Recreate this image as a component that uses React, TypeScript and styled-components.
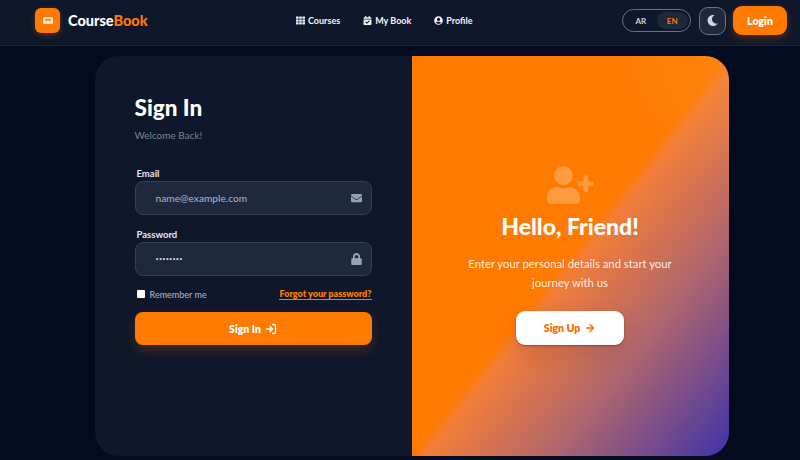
import React from "react";
import styled, { createGlobalStyle } from "styled-components";
import { FaTh, FaCalendarCheck, FaUserCircle, FaMoon, FaEnvelope, FaLock, FaUserPlus } from "react-icons/fa";
import { ArrowRight, LogIn } from "lucide-react";

const Global = createGlobalStyle`
    html, body {
        margin: 0;
        padding: 0;
        background: #050b1f;
    }
    * {
        box-sizing: border-box;
    }
    body {
        font-family: "Lato", "Noto Sans", sans-serif;
    }
`;

const Page = styled.div`
    width: 800px;
    height: 460px;
    overflow: hidden;
    background: #050b1f;
`;

const Header = styled.header`
    height: 46px;
    display: flex;
    align-items: center;
    padding: 0 13px 4px 35px;
    background: #0f172a;
    border-bottom: 1px solid #1b2436;
`;

const Brand = styled.div`
    width: 240px;
    display: flex;
    align-items: center;
    gap: 8px;
`;

const LogoBox = styled.div`
    width: 25px;
    height: 25px;
    border-radius: 6px;
    background: #ff7a00;
    display: flex;
    align-items: center;
    justify-content: center;
    box-shadow: 0 2px 6px rgba(255, 122, 0, 0.25);
`;

const BrandName = styled.span`
    font-size: 14.5px;
    font-weight: 900;
    color: #fff;
    em {
        font-style: normal;
        color: #ff7a00;
    }
`;

const Nav = styled.nav`
    display: flex;
    align-items: center;
    gap: 23px;
    margin-left: 21px;
`;

const NavItem = styled.a`
    display: flex;
    align-items: center;
    gap: 3px;
    font-size: 9px;
    font-weight: 700;
    color: #f1f5f9;
    svg {
        width: 9px;
        height: 9px;
    }
`;

const HeaderRight = styled.div`
    margin-left: auto;
    display: flex;
    align-items: center;
`;

const LangSwitch = styled.div`
    width: 69px;
    height: 23px;
    margin-right: 8px;
    border: 1px solid #64748b;
    border-radius: 12px;
    display: flex;
    align-items: center;
    padding: 2px;
`;

const LangOption = styled.span<{ active?: boolean }>`
    flex: 1;
    height: 17px;
    border-radius: 9px;
    display: flex;
    align-items: center;
    justify-content: center;
    font-size: 8px;
    font-weight: 700;
    color: ${({ active }) => (active ? "#ff7a00" : "#cbd5e1")};
    background: ${({ active }) => (active ? "#1e293b" : "transparent")};
`;

const ThemeButton = styled.button`
    width: 27px;
    height: 28px;
    margin-right: 7px;
    padding: 0;
    border: 1px solid #64748b;
    border-radius: 9px;
    background: #1e293b;
    color: #cbd5e1;
    display: flex;
    align-items: center;
    justify-content: center;
    svg {
        width: 11px;
        height: 11px;
    }
`;

const LoginButton = styled.button`
    width: 54px;
    height: 29px;
    padding: 0;
    border: none;
    border-radius: 9px;
    background: #ff7a00;
    color: #fff;
    font-family: inherit;
    font-size: 10.5px;
    font-weight: 800;
    box-shadow: 0 3px 8px rgba(255, 122, 0, 0.25);
`;

const Main = styled.main`
    display: flex;
    justify-content: center;
    padding: 10px 0 0 24px;
    margin-left: -1px;
`;

const Card = styled.div`
    width: 634px;
    height: 400px;
    display: flex;
    border-radius: 24px;
    overflow: hidden;
    background: #0f172a;
`;

const FormPanel = styled.section`
    width: 317px;
    padding: 37px 40px 0;
    display: flex;
    flex-direction: column;
`;

const Title = styled.h1`
    margin: 0;
    font-size: 22.5px;
    line-height: 30px;
    font-weight: 900;
    color: #fff;
`;

const Subtitle = styled.p`
    margin: 5px 0 0;
    font-size: 10px;
    line-height: 14px;
    color: #76839a;
`;

const Field = styled.div<{ first?: boolean }>`
    margin-top: ${({ first }) => (first ? "26px" : "14px")};
`;

const Label = styled.label`
    display: block;
    padding-left: 2px;
    font-size: 9.5px;
    line-height: 12px;
    font-weight: 700;
    color: #e2e8f0;
    margin-bottom: 1px;
`;

const InputBox = styled.div`
    height: 34px;
    display: flex;
    align-items: center;
    justify-content: space-between;
    padding: 0 9px 0 20px;
    border: 1px solid #334155;
    border-radius: 8px;
    background: #1e293b;
    color: #aab6c8;
    font-size: 10.2px;
    svg {
        width: 11px;
        height: 12px;
        color: #94a3b8;
    }
`;

const Dots = styled.span`
    font-size: 5.5px;
    letter-spacing: 0.2px;
    color: #cbd5e1;
`;

const OptionsRow = styled.div`
    margin-top: 12px;
    display: flex;
    align-items: center;
    justify-content: space-between;
`;

const Remember = styled.label`
    display: flex;
    align-items: center;
    gap: 5px;
    padding-left: 2px;
    font-size: 9px;
    font-weight: 500;
    color: #a3b0c2;
`;

const CheckBox = styled.span`
    width: 8px;
    height: 8px;
    background: #fff;
    border-radius: 1px;
`;

const Forgot = styled.a`
    font-size: 9px;
    font-weight: 800;
    color: #ff7a00;
    border-bottom: 1px solid #ff7a00;
`;

const SubmitButton = styled.button`
    margin-top: 12px;
    height: 33px;
    border: none;
    border-radius: 8px;
    background: #ff7a00;
    color: #fff;
    font-family: inherit;
    font-size: 10.5px;
    font-weight: 800;
    display: flex;
    align-items: center;
    justify-content: center;
    gap: 4px;
    box-shadow: 0 5px 12px rgba(255, 122, 0, 0.2);
    svg {
        width: 12px;
        height: 12px;
        stroke-width: 2.6;
    }
`;

const PromoPanel = styled.section`
    width: 317px;
    display: flex;
    flex-direction: column;
    align-items: center;
    padding-top: 110px;
    color: #fff;
    background:
        radial-gradient(circle at 100% 0, rgba(255, 170, 70, 0.2), transparent 130px),
        linear-gradient(to bottom right, #ff7a00 0%, #ff7a00 49.7%, #f37d38 52%, #b0666e 72%, #3f33a8 100%);
`;

const PromoIcon = styled(FaUserPlus)`
    width: 47px;
    height: 38px;
    color: rgba(255, 255, 255, 0.25);
`;

const PromoTitle = styled.h2`
    margin: 7px 0 0;
    font-size: 23px;
    line-height: 30px;
    font-weight: 900;
`;

const PromoText = styled.p`
    margin: 13px 0 0;
    width: 240px;
    font-size: 11.3px;
    line-height: 19px;
    text-align: center;
    color: rgba(255, 255, 255, 0.88);
`;

const SignUpButton = styled.button`
    margin-top: 19px;
    width: 108px;
    height: 34px;
    border: none;
    border-radius: 9px;
    background: #fff;
    color: #ff6a00;
    font-family: inherit;
    font-size: 10.5px;
    font-weight: 800;
    display: flex;
    align-items: center;
    justify-content: center;
    gap: 4px;
    box-shadow: 0 1px 2px rgba(120, 30, 30, 0.5), 0 10px 24px rgba(0, 0, 0, 0.1);
    svg {
        width: 12px;
        height: 12px;
        stroke-width: 2.6;
    }
`;

const App = () => {
    return (
        <Page>
            <Global />
            <Header>
                <Brand>
                    <LogoBox>
                        <svg width="10" height="7" viewBox="0 0 10 7">
                            <rect width="10" height="7" rx="1" fill="#ffe3c7" />
                            <rect x="2" y="2.2" width="6" height="1.6" fill="#ff7a00" />
                        </svg>
                    </LogoBox>
                    <BrandName>Course<em>Book</em></BrandName>
                </Brand>
                <Nav>
                    <NavItem><FaTh />Courses</NavItem>
                    <NavItem><FaCalendarCheck />My Book</NavItem>
                    <NavItem><FaUserCircle />Profile</NavItem>
                </Nav>
                <HeaderRight>
                    <LangSwitch>
                        <LangOption>AR</LangOption>
                        <LangOption active>EN</LangOption>
                    </LangSwitch>
                    <ThemeButton><FaMoon /></ThemeButton>
                    <LoginButton>Login</LoginButton>
                </HeaderRight>
            </Header>
            <Main>
                <Card>
                    <FormPanel>
                        <Title>Sign In</Title>
                        <Subtitle>Welcome Back!</Subtitle>
                        <Field first>
                            <Label>Email</Label>
                            <InputBox>name@example.com<FaEnvelope /></InputBox>
                        </Field>
                        <Field>
                            <Label>Password</Label>
                            <InputBox><Dots>••••••••</Dots><FaLock /></InputBox>
                        </Field>
                        <OptionsRow>
                            <Remember><CheckBox />Remember me</Remember>
                            <Forgot>Forgot your password?</Forgot>
                        </OptionsRow>
                        <SubmitButton>Sign In <LogIn /></SubmitButton>
                    </FormPanel>
                    <PromoPanel>
                        <PromoIcon />
                        <PromoTitle>Hello, Friend!</PromoTitle>
                        <PromoText>Enter your personal details and start your journey with us</PromoText>
                        <SignUpButton>Sign Up <ArrowRight /></SignUpButton>
                    </PromoPanel>
                </Card>
            </Main>
        </Page>
    );
};

export default App;
